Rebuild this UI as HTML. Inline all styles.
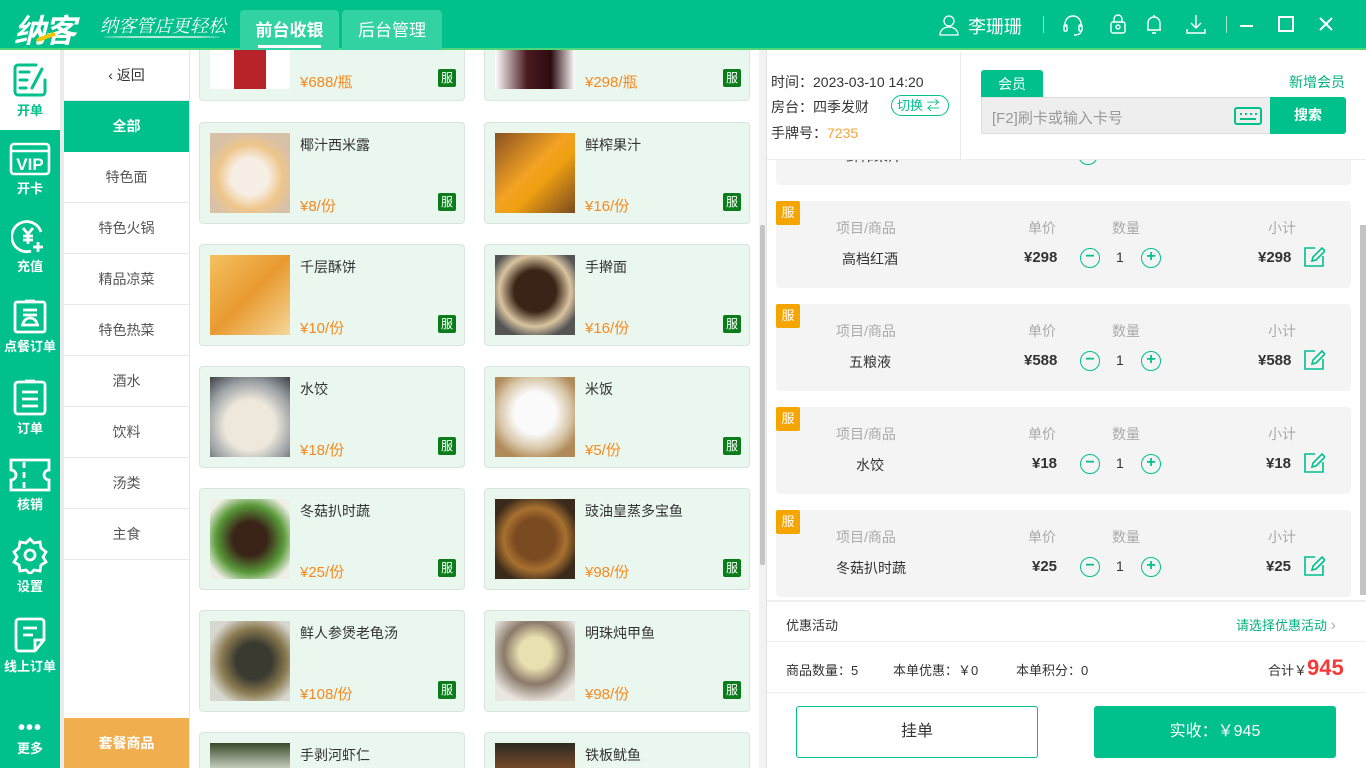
<!DOCTYPE html>
<html><head><meta charset="utf-8">
<style>
*{margin:0;padding:0;box-sizing:border-box}
html,body{width:1366px;height:768px;overflow:hidden}
body{position:relative;background:#fff;font-family:"Liberation Sans","Noto Sans CJK SC",sans-serif;color:#333}
.a{position:absolute}
.hdr{left:0;top:0;width:1366px;height:50px;background:#00c08b;border-bottom:2px solid #4fd67a}
.tab{top:10px;height:40px;background:#33d2a3;border-radius:4px 4px 0 0;color:#fff;font-size:17px;text-align:center;line-height:42px}
.side{left:0;top:50px;width:60px;height:718px;background:#00c08b}
.si{left:0;width:60px;text-align:center;color:#fff;font-size:13px;font-weight:bold}
.si svg{display:block;margin:0 auto 2px}
.cat{left:64px;width:125px;height:51px;border-bottom:1px solid #e8e8e8;text-align:center;line-height:51px;font-size:14px;color:#555}
.card{width:266px;height:102px;background:#eaf7ee;border:1px solid #d9e6dd;border-radius:4px;overflow:hidden}
.card .im{position:absolute;left:10px;top:10px;width:80px;height:80px}
.card .nm{position:absolute;left:100px;top:12px;font-size:14px;color:#333}
.card .pr{position:absolute;left:100px;top:72px;font-size:15px;color:#f5891f}
.card .bd{position:absolute;left:238px;top:70px;width:18px;height:18px;background:#0a7d1a;color:#fff;font-size:12px;line-height:18px;text-align:center;border-radius:2px}
.card.t{height:51px;border-top:0;border-radius:0 0 4px 4px}
.card.t .im{top:0;height:39px}.card.t .pr{top:21px}.card.t .bd{top:19px}
.card.btm{height:36px;border-bottom:0;border-radius:4px 4px 0 0}
.card.btm .im{height:26px}
.oc{left:776px;width:575px;height:87px;background:#f4f4f4;border-radius:4px}
.oc .b{position:absolute;left:0;top:0;width:24px;height:24px;background:#f5a500;color:#fff;font-size:13px;line-height:24px;text-align:center;border-radius:2px}
.oc .h{position:absolute;top:17px;font-size:14px;color:#aaa}
.oc .v{position:absolute;top:48px;font-size:14px;color:#333}
.oc .p{position:absolute;top:48px;font-size:15px;font-weight:bold;color:#333}
.circ{position:absolute;top:47px;width:20px;height:20px;border:1.5px solid #00c08b;border-radius:50%;color:#00c08b;text-align:center;line-height:16px;font-size:16px;font-weight:bold}
.pa{position:absolute;left:0;top:50px;width:759px;height:718px;overflow:hidden}
</style></head><body>

<!-- products -->
<div class="pa">
<div class="a card t" style="left:199px;top:0"><div class="im" style="background:linear-gradient(90deg,#fff 30%,#b8232a 30%,#b8232a 70%,#fff 70%)"></div><div class="pr">¥688/瓶</div><div class="bd">服</div></div>
<div class="a card t" style="left:484px;top:0"><div class="im" style="background:linear-gradient(90deg,#fff,#4a1a20 40%,#2b0b10 70%,#fff)"></div><div class="pr">¥298/瓶</div><div class="bd">服</div></div>

<div class="a card" style="left:199px;top:72px"><div class="im" style="background:radial-gradient(circle at 50% 55%,#f7efe6 30%,#eec58a 55%,#d9c1a8 75%)"></div><div class="nm">椰汁西米露</div><div class="pr">¥8/份</div><div class="bd">服</div></div>
<div class="a card" style="left:484px;top:72px"><div class="im" style="background:linear-gradient(135deg,#8a5120,#f3a224 45%,#f0a010 60%,#7b4a1e)"></div><div class="nm">鲜榨果汁</div><div class="pr">¥16/份</div><div class="bd">服</div></div>

<div class="a card" style="left:199px;top:194px"><div class="im" style="background:linear-gradient(135deg,#f5c060,#e89a30 50%,#f5d79a)"></div><div class="nm">千层酥饼</div><div class="pr">¥10/份</div><div class="bd">服</div></div>
<div class="a card" style="left:484px;top:194px"><div class="im" style="background:radial-gradient(circle at 50% 45%,#3a2418 35%,#d9c4a0 60%,#555 80%)"></div><div class="nm">手擀面</div><div class="pr">¥16/份</div><div class="bd">服</div></div>

<div class="a card" style="left:199px;top:316px"><div class="im" style="background:radial-gradient(circle at 50% 60%,#eee8dc 40%,#9aa0a4 70%,#3c3f44)"></div><div class="nm">水饺</div><div class="pr">¥18/份</div><div class="bd">服</div></div>
<div class="a card" style="left:484px;top:316px"><div class="im" style="background:radial-gradient(circle at 50% 45%,#fafafa 35%,#d8c6a8 60%,#b08a58 80%)"></div><div class="nm">米饭</div><div class="pr">¥5/份</div><div class="bd">服</div></div>

<div class="a card" style="left:199px;top:438px"><div class="im" style="background:radial-gradient(circle at 50% 50%,#3a2418 30%,#5a9a3a 60%,#f0f0e8 85%)"></div><div class="nm">冬菇扒时蔬</div><div class="pr">¥25/份</div><div class="bd">服</div></div>
<div class="a card" style="left:484px;top:438px"><div class="im" style="background:radial-gradient(ellipse at 50% 50%,#7a4a20 35%,#a87030 55%,#3a2a1a 80%)"></div><div class="nm">豉油皇蒸多宝鱼</div><div class="pr">¥98/份</div><div class="bd">服</div></div>

<div class="a card" style="left:199px;top:560px"><div class="im" style="background:radial-gradient(circle at 55% 50%,#3a3a30 30%,#8a7a50 55%,#d8d8d0 80%)"></div><div class="nm">鲜人参煲老龟汤</div><div class="pr">¥108/份</div><div class="bd">服</div></div>
<div class="a card" style="left:484px;top:560px"><div class="im" style="background:radial-gradient(circle at 50% 40%,#e8e0b0 25%,#8a7a6a 50%,#eae6e0 80%)"></div><div class="nm">明珠炖甲鱼</div><div class="pr">¥98/份</div><div class="bd">服</div></div>

<div class="a card btm" style="left:199px;top:682px"><div class="im" style="background:linear-gradient(#3a4a2a,#c8d0c0)"></div><div class="nm">手剥河虾仁</div></div>
<div class="a card btm" style="left:484px;top:682px"><div class="im" style="background:linear-gradient(#2a2a20,#7a4a2a)"></div><div class="nm">铁板鱿鱼</div></div>
</div>

<div class="a hdr"></div>
<div class="a" style="left:14px;top:6px;color:#fff;font-size:32px;font-weight:bold;font-style:italic;letter-spacing:-2px">纳客</div>
<div class="a" style="left:36px;top:35px;width:20px;height:4px;background:#f3c400;border-radius:2px;transform:rotate(-20deg)"></div>
<div class="a" style="left:100px;top:12px;color:#fff;font-size:18px;font-style:italic;font-family:'Noto Serif CJK SC',serif">纳客管店更轻松</div>
<div class="a" style="left:104px;top:36px;width:116px;height:2px;background:rgba(255,255,255,.7);border-radius:50%"></div>
<div class="a tab" style="left:240px;width:99px;font-weight:bold">前台收银<div style="position:absolute;left:18px;right:18px;bottom:2px;height:3px;background:#fff"></div></div>
<div class="a tab" style="left:342px;width:100px">后台管理</div>

<svg class="a" style="left:938px;top:14px" width="22" height="22" viewBox="0 0 22 22" fill="none" stroke="#fff" stroke-width="1.3"><circle cx="11" cy="7" r="5"/><path d="M2 21c0-5 4-8 9-8s9 3 9 8z"/></svg>
<div class="a" style="left:968px;top:13px;color:#fff;font-size:18px">李珊珊</div>
<div class="a" style="left:1043px;top:16px;width:1px;height:17px;background:#9ee5cc"></div>
<svg class="a" style="left:1062px;top:14px" width="22" height="22" viewBox="0 0 22 22" fill="none" stroke="#fff" stroke-width="1.4"><path d="M3 13V10a8 8 0 0116 0v3"/><rect x="2" y="11" width="3" height="6" rx="1"/><rect x="17" y="11" width="3" height="6" rx="1"/><path d="M19 17c0 3-3 4-7 4"/></svg>
<svg class="a" style="left:1109px;top:13px" width="18" height="22" viewBox="0 0 18 22" fill="none" stroke="#fff" stroke-width="1.4"><rect x="2" y="9" width="14" height="11" rx="2"/><path d="M5 9V6a4 4 0 018 0v3"/><circle cx="9" cy="14" r="2"/></svg>
<svg class="a" style="left:1144px;top:13px" width="20" height="22" viewBox="0 0 20 22" fill="none" stroke="#fff" stroke-width="1.4"><path d="M4 17V10a6 6 0 0112 0v7H3h14"/><path d="M8 20h4M10 2v2"/></svg>
<svg class="a" style="left:1185px;top:13px" width="22" height="22" viewBox="0 0 22 22" fill="none" stroke="#fff" stroke-width="1.4"><path d="M11 2v13M6 10l5 5 5-5M2 16v4h18v-4"/></svg>
<div class="a" style="left:1226px;top:16px;width:1px;height:17px;background:#9ee5cc"></div>
<div class="a" style="left:1240px;top:25px;width:13px;height:2px;background:#fff"></div>
<div class="a" style="left:1278px;top:16px;width:16px;height:16px;border:2px solid #fff"></div>
<svg class="a" style="left:1318px;top:16px" width="16" height="16" viewBox="0 0 16 16" stroke="#fff" stroke-width="2"><path d="M2 2l12 12M14 2L2 14"/></svg>

<!-- sidebar -->
<div class="a side"></div>
<div class="a" style="left:0;top:50px;width:60px;height:80px;background:#fff"></div>
<div class="a" style="left:60px;top:50px;width:4px;height:718px;background:#ebebeb"></div>
<div class="a si" style="top:62px;color:#00c08b"><svg width="36" height="36" viewBox="0 0 36 36" fill="none" stroke="#00c08b" stroke-width="3" stroke-linecap="round"><path d="M24 3H6a3 3 0 00-3 3v24a3 3 0 003 3h24a3 3 0 003-3V18"/><path d="M8 10h9M8 18h7M8 26h6M20 26l10-19"/></svg>开单</div>
<div class="a si" style="top:142px"><svg width="42" height="34" viewBox="0 0 42 34" fill="none" stroke="#fff" stroke-width="2.6"><rect x="2" y="2" width="38" height="30" rx="3"/><path d="M2 9h38"/><text x="21" y="28" text-anchor="middle" fill="#fff" stroke="none" font-size="17" font-weight="bold" font-family="Liberation Sans">VIP</text></svg>开卡</div>
<div class="a si" style="top:220px"><svg width="38" height="34" viewBox="0 0 38 34" fill="none" stroke="#fff" stroke-width="2.8"><path d="M30 12A15 15 0 1020 31"/><path d="M12 8l5 6 5-6M17 14v10M12 16h10M12 20h10M27 22v10M22 27h10"/></svg>充值</div>
<div class="a si" style="top:298px"><svg width="36" height="36" viewBox="0 0 36 36" fill="none" stroke="#fff" stroke-width="2.8"><rect x="3" y="4" width="30" height="30" rx="2"/><path d="M13 3h10M11 12h14M11 17h14M9 27h18M11 27a7 7 0 0114 0"/></svg>点餐订单</div>
<div class="a si" style="top:378px"><svg width="36" height="38" viewBox="0 0 36 38" fill="none" stroke="#fff" stroke-width="2.8"><rect x="3" y="4" width="30" height="32" rx="3"/><path d="M13 3h10M10 14h16M10 21h16M10 28h16"/></svg>订单</div>
<div class="a si" style="top:458px"><svg width="46" height="34" viewBox="0 0 46 34" fill="none" stroke="#fff" stroke-width="2.8"><path d="M4 2h38v10a5 5 0 000 10v10H4V22a5 5 0 000-10z"/><path d="M17 4v6M17 14v6M17 24v6"/></svg>核销</div>
<div class="a si" style="top:536px"><svg width="38" height="38" viewBox="0 0 38 38" fill="none" stroke="#fff" stroke-width="2.8"><path d="M19 3l4 4 6-1 1 6 5 4-3 5 3 5-5 3-1 6-6-1-4 4-4-4-6 1-1-6-5-3 3-5-3-5 5-4 1-6 6 1z"/><circle cx="19" cy="19" r="5"/></svg>设置</div>
<div class="a si" style="top:616px"><svg width="34" height="38" viewBox="0 0 34 38" fill="none" stroke="#fff" stroke-width="2.8"><path d="M31 24V6a3 3 0 00-3-3H6a3 3 0 00-3 3v26a3 3 0 003 3h16z M31 24h-9v11"/><path d="M10 12h14M10 19h10"/></svg>线上订单</div>
<div class="a si" style="top:722px;font-size:20px;line-height:12px;letter-spacing:1px">•••</div>
<div class="a si" style="top:740px;line-height:18px">更多</div>

<!-- categories -->
<div class="a" style="left:189px;top:50px;width:1px;height:718px;background:#e8e8e8"></div>
<div class="a cat" style="top:50px;color:#333;font-size:14px">‹ 返回</div>
<div class="a cat" style="top:101px;background:#00c08b;color:#fff;font-weight:bold;border:0">全部</div>
<div class="a cat" style="top:152px">特色面</div>
<div class="a cat" style="top:203px">特色火锅</div>
<div class="a cat" style="top:254px">精品凉菜</div>
<div class="a cat" style="top:305px">特色热菜</div>
<div class="a cat" style="top:356px">酒水</div>
<div class="a cat" style="top:407px">饮料</div>
<div class="a cat" style="top:458px">汤类</div>
<div class="a cat" style="top:509px">主食</div>
<div class="a" style="left:64px;top:718px;width:125px;height:50px;background:#f0ae4e;color:#fff;font-size:14px;text-align:center;line-height:50px;font-weight:bold">套餐商品</div>

<div class="a" style="left:759px;top:50px;width:7px;height:718px;background:#f2f2f2"></div>
<div class="a" style="left:760px;top:225px;width:5px;height:340px;background:#c4c4c4;border-radius:2px"></div>

<!-- right panel -->
<div class="a" style="left:766px;top:50px;width:1px;height:718px;background:#e2e2e2"></div>

<div class="a oc" style="top:98px"><div class="v" style="left:70px">鲜榨果汁</div><div class="circ" style="left:302px;top:47px">−</div></div>
<div class="a oc" style="top:201px"><div class="b">服</div><div class="h" style="left:60px">项目/商品</div><div class="h" style="left:252px">单价</div><div class="h" style="left:336px">数量</div><div class="h" style="left:492px">小计</div>
<div class="v" style="left:66px">高档红酒</div><div class="p" style="left:248px">¥298</div><div class="circ" style="left:304px">−</div><div class="v" style="left:340px">1</div><div class="circ" style="left:365px">+</div><div class="p" style="left:482px">¥298</div>
<svg style="position:absolute;left:527px;top:45px" width="22" height="22" viewBox="0 0 22 22" fill="none" stroke="#00c08b" stroke-width="1.6"><path d="M12 2H2v18h18V10"/><path d="M9 15l1-4 9-9 3 3-9 9z"/></svg></div>
<div class="a oc" style="top:304px"><div class="b">服</div><div class="h" style="left:60px">项目/商品</div><div class="h" style="left:252px">单价</div><div class="h" style="left:336px">数量</div><div class="h" style="left:492px">小计</div>
<div class="v" style="left:73px">五粮液</div><div class="p" style="left:248px">¥588</div><div class="circ" style="left:304px">−</div><div class="v" style="left:340px">1</div><div class="circ" style="left:365px">+</div><div class="p" style="left:482px">¥588</div>
<svg style="position:absolute;left:527px;top:45px" width="22" height="22" viewBox="0 0 22 22" fill="none" stroke="#00c08b" stroke-width="1.6"><path d="M12 2H2v18h18V10"/><path d="M9 15l1-4 9-9 3 3-9 9z"/></svg></div>
<div class="a oc" style="top:407px"><div class="b">服</div><div class="h" style="left:60px">项目/商品</div><div class="h" style="left:252px">单价</div><div class="h" style="left:336px">数量</div><div class="h" style="left:492px">小计</div>
<div class="v" style="left:80px">水饺</div><div class="p" style="left:256px">¥18</div><div class="circ" style="left:304px">−</div><div class="v" style="left:340px">1</div><div class="circ" style="left:365px">+</div><div class="p" style="left:490px">¥18</div>
<svg style="position:absolute;left:527px;top:45px" width="22" height="22" viewBox="0 0 22 22" fill="none" stroke="#00c08b" stroke-width="1.6"><path d="M12 2H2v18h18V10"/><path d="M9 15l1-4 9-9 3 3-9 9z"/></svg></div>
<div class="a oc" style="top:510px"><div class="b">服</div><div class="h" style="left:60px">项目/商品</div><div class="h" style="left:252px">单价</div><div class="h" style="left:336px">数量</div><div class="h" style="left:492px">小计</div>
<div class="v" style="left:60px">冬菇扒时蔬</div><div class="p" style="left:256px">¥25</div><div class="circ" style="left:304px">−</div><div class="v" style="left:340px">1</div><div class="circ" style="left:365px">+</div><div class="p" style="left:490px">¥25</div>
<svg style="position:absolute;left:527px;top:45px" width="22" height="22" viewBox="0 0 22 22" fill="none" stroke="#00c08b" stroke-width="1.6"><path d="M12 2H2v18h18V10"/><path d="M9 15l1-4 9-9 3 3-9 9z"/></svg></div>
<div class="a" style="left:1360px;top:225px;width:6px;height:370px;background:#c4c4c4"></div>

<!-- header info -->
<div class="a" style="left:767px;top:52px;width:599px;height:108px;background:#fff;border-bottom:1px solid #eee"></div>
<div class="a" style="left:960px;top:52px;width:1px;height:108px;background:#e8e8e8"></div>
<div class="a" style="left:771px;top:72px;font-size:14px;color:#333">时间：2023-03-10 14:20</div>
<div class="a" style="left:771px;top:97px;font-size:14px;color:#333">房台：四季发财</div>
<div class="a" style="left:891px;top:95px;width:58px;height:21px;border:1px solid #00c08b;border-radius:11px;color:#00c08b;font-size:13px;line-height:19px;padding-left:5px">切换 ⇄</div>
<div class="a" style="left:771px;top:123px;font-size:14px;color:#333">手牌号：<span style="color:#f5a53a">7235</span></div>
<div class="a" style="left:981px;top:70px;width:62px;height:28px;background:#00c08b;border-radius:3px 3px 0 0;color:#fff;font-size:14px;text-align:center;line-height:28px">会员</div>
<div class="a" style="left:1289px;top:72px;font-size:14px;color:#00b080">新增会员</div>
<div class="a" style="left:981px;top:97px;width:290px;height:37px;background:#eeeeee;border:1px solid #ddd;border-right:0"></div>
<div class="a" style="left:992px;top:107px;font-size:15px;color:#999">[F2]刷卡或输入卡号</div>
<svg class="a" style="left:1234px;top:107px" width="28" height="18" viewBox="0 0 28 18" fill="none" stroke="#00c08b" stroke-width="2"><rect x="1" y="1" width="26" height="16" rx="2"/><path d="M6 7h2M11 7h2M16 7h2M21 7h2M6 12h16" stroke-width="2"/></svg>
<div class="a" style="left:1270px;top:97px;width:76px;height:37px;background:#00c08b;border-radius:0 3px 3px 0;color:#fff;font-size:14px;text-align:center;line-height:37px;font-weight:bold">搜索</div>

<!-- bottom -->
<div class="a" style="left:767px;top:600px;width:599px;height:168px;background:#fff;border-top:2px solid #eee"></div>
<div class="a" style="left:786px;top:615px;font-size:13px;color:#333">优惠活动</div>
<div class="a" style="left:1236px;top:615px;font-size:13px;color:#00b080">请选择优惠活动 <span style="color:#aaa;font-size:16px">›</span></div>
<div class="a" style="left:767px;top:641px;width:599px;height:1px;background:#eee"></div>
<div class="a" style="left:786px;top:660px;font-size:13px;color:#333">商品数量：5</div>
<div class="a" style="left:893px;top:660px;font-size:13px;color:#333">本单优惠：￥0</div>
<div class="a" style="left:1016px;top:660px;font-size:13px;color:#333">本单积分：0</div>
<div class="a" style="left:1268px;top:655px;font-size:13px;color:#333">合计￥<span style="color:#f53a3a;font-size:22px;font-weight:bold">945</span></div>
<div class="a" style="left:767px;top:692px;width:599px;height:1px;background:#eee"></div>
<div class="a" style="left:796px;top:706px;width:242px;height:52px;border:1px solid #00c08b;border-radius:3px;text-align:center;line-height:50px;font-size:16px;color:#333">挂单</div>
<div class="a" style="left:1094px;top:706px;width:242px;height:52px;background:#00c08b;border-radius:3px;text-align:center;line-height:52px;font-size:16px;color:#fff">实收：￥945</div>
</body></html>
